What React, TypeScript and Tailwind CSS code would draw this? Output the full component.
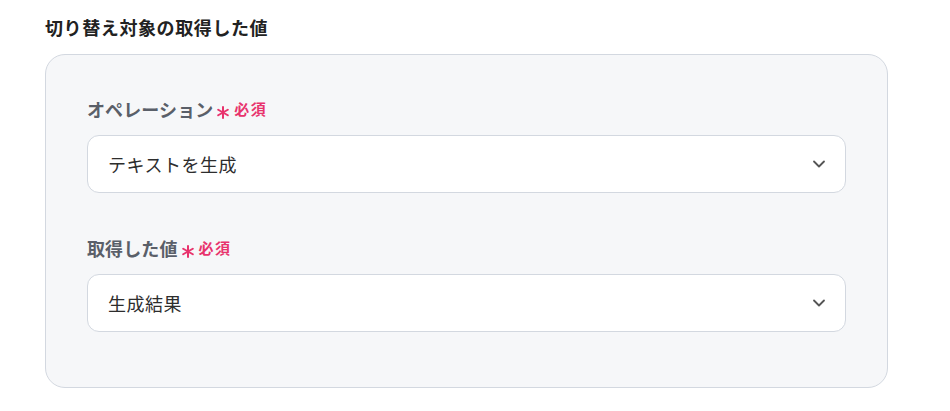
import { ChevronDown } from "lucide-react";

const font = { fontFamily: '"Noto Sans CJK JP", "Noto Sans", sans-serif' };

function RequiredMark() {
  return (
    <svg viewBox="0 0 12 13" className="ml-[4px] mt-[7px] h-[13px] w-[12px]" fill="none" stroke="#e8336d" strokeWidth={2} strokeLinecap="round">
      <path d="M6 1v11" />
      <path d="M1.2 3.75l9.6 5.5" />
      <path d="M1.2 9.25l9.6-5.5" />
    </svg>
  );
}

function Field({ label, value, className }: { label: string; value: string; className?: string }) {
  return (
    <div className={className}>
      <div className="flex items-center mb-[14px] h-[24px]">
        <span className="text-[18px] leading-[24px] font-bold text-[#5a5f69] tracking-[0.1px]">{label}</span>
        <RequiredMark />
        <span className="ml-[5px] text-[15px] leading-[24px] font-bold text-[#e8336d] tracking-[1.5px]">必須</span>
      </div>
      <div className="flex h-[58px] items-center justify-between rounded-[12px] border border-[#d3d8e0] bg-white pl-[20px] pr-[16px]">
        <span className="text-[18px] text-[#2d2d2d] tracking-[0.5px]">{value}</span>
        <ChevronDown className="h-[20px] w-[20px] text-[#555]" strokeWidth={2.2} />
      </div>
    </div>
  );
}

export default function App() {
  return (
    <div className="min-h-[411px] bg-white px-[45px] pt-[13px]" style={font}>
      <h2 className="mb-[13px] text-[18px] leading-[28px] font-bold text-[#222] tracking-[0.6px]">切り替え対象の取得した値</h2>
      <div className="w-[843px] rounded-[20px] border border-[#d3d8e0] bg-[#f6f7f9] px-[41px] pt-[42px] pb-[55px]">
        <Field label="オペレーション" value="テキストを生成" />
        <Field label="取得した値" value="生成結果" className="mt-[43px]" />
      </div>
    </div>
  );
}
